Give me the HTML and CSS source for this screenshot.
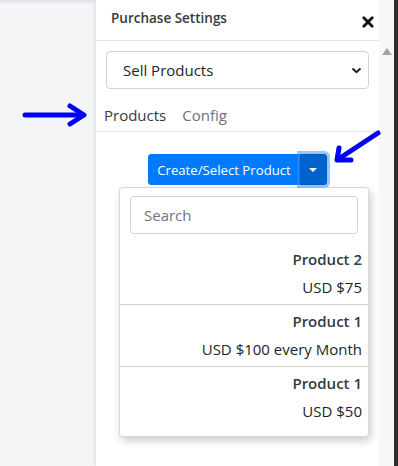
FILE: index.html
```html
<!DOCTYPE html>
<html lang="en">
<head>
    <meta charset="UTF-8">
    <meta name="viewport" content="width=device-width, initial-scale=1.0">
    <title>Purchase Settings</title>
    <link rel="stylesheet" href="styles.css">
</head>
<body>
    <div class="page">
        <div class="backdrop"></div>

        <aside class="panel">
            <header class="panel-head">
                <h2>Purchase Settings</h2>
                <button class="close" type="button" aria-label="Close">
                    <svg width="12" height="12" viewBox="0 0 12 12"><path d="M1.8 1.8 L10.2 10.2 M10.2 1.8 L1.8 10.2" stroke="#111" stroke-width="2.8" stroke-linecap="round"/></svg>
                </button>
            </header>

            <div class="panel-body">
                <div class="select">
                    <span>Sell Products</span>
                    <svg width="11" height="7" viewBox="0 0 11 7"><path d="M1.5 1.5 L5.5 5.2 L9.5 1.5" fill="none" stroke="#222" stroke-width="2"/></svg>
                </div>

                <nav class="tabs">
                    <a class="tab active">Products</a>
                    <a class="tab">Config</a>
                </nav>

                <div class="picker">
                    <div class="btn-group">
                        <button class="btn-main" type="button">Create/Select Product</button>
                        <button class="btn-toggle" type="button"><span class="caret"></span></button>
                    </div>

                    <div class="menu">
                        <div class="search">Search</div>
                        <div class="item">
                            <div class="item-name">Product 2</div>
                            <div class="item-price">USD $75</div>
                        </div>
                        <div class="item">
                            <div class="item-name">Product 1</div>
                            <div class="item-price">USD $100 every Month</div>
                        </div>
                        <div class="item">
                            <div class="item-name">Product 1</div>
                            <div class="item-price">USD $50</div>
                        </div>
                    </div>
                </div>
            </div>
        </aside>

        <div class="scrollbar"><span class="scroll-up"></span></div>
        <div class="edge"></div>

        <!-- annotation arrows -->
        <svg class="arrows" width="398" height="466" viewBox="0 0 398 466">
            <g fill="none" stroke="#0000f5" stroke-width="5" stroke-linecap="round" stroke-linejoin="round">
                <path d="M25 115 L82 115"/>
                <path d="M70 106 L84 115 L70 124"/>
                <path d="M378 133 L340 158"/>
                <path d="M339 148 L337 160 L351 160"/>
            </g>
        </svg>
    </div>
</body>
</html>
```

FILE: styles.css
```css
* {
    box-sizing: border-box;
}
body {
    margin: 0;
    font-family: "Open Sans", "Liberation Sans", sans-serif;
    color: #343a40;
    background-color: #f4f5f7;
}
.page {
    position: relative;
    display: flex;
    height: 466px;
    overflow: hidden;
}
.backdrop {
    width: 95px;
    background: linear-gradient(#dcdfe2, #f4f5f7 4px);
}
.panel {
    width: 284px;
    background-color: #fff;
    border-left: 1px solid #e3e5e8;
    box-shadow: -2px 0 3px rgba(0,0,0,0.04);
}
.panel-head {
    display: flex;
    justify-content: space-between;
    align-items: center;
    height: 41px;
    padding: 0 5px 0 15px;
    border-bottom: 1px solid #e2e4e7;
}
.panel-head h2 {
    margin: 0 0 4px;
    font-size: 13.5px;
    font-weight: 600;
    color: #343a40;
}
.close {
    display: flex;
    padding: 0;
    margin-top: 4px;
    border: none;
    background: none;
}
.panel-body {
    padding-top: 10px;
}
.select {
    display: flex;
    justify-content: space-between;
    align-items: center;
    height: 38px;
    margin: 0 10px;
    padding: 0 6px 0 16px;
    border: 1px solid #ced4da;
    border-radius: 4px;
    font-size: 15px;
    color: #212529;
}
.tabs {
    display: flex;
    gap: 16px;
    margin-top: 14px;
    padding: 0 8px 4px;
    border-bottom: 1px solid #e2e4e7;
}
.tab {
    font-size: 15px;
    line-height: 24px;
    color: #6c757d;
}
.tab.active {
    color: #343a40;
}
.picker {
    padding-top: 22px;
}
.btn-group {
    display: flex;
    justify-content: center;
}
.btn-main, .btn-toggle {
    height: 31px;
    border: 1px solid #007bff;
    color: #fff;
    font-family: inherit;
    font-size: 13.2px;
}
.btn-main {
    padding: 0 8px;
    background-color: #007bff;
    border-radius: 3px 0 0 3px;
}
.btn-toggle {
    display: flex;
    justify-content: center;
    align-items: center;
    width: 27px;
    padding: 0;
    background-color: #0062cc;
    border-color: #005cbf;
    border-radius: 0 3px 3px 0;
    box-shadow: 0 0 0 3px rgba(38,143,255,0.5);
}
.caret {
    width: 0;
    height: 0;
    border-left: 4px solid transparent;
    border-right: 4px solid transparent;
    border-top: 4px solid #fff;
}
.menu {
    width: 250px;
    margin: 2px 0 0 23px;
    padding: 8px 0;
    background-color: #fff;
    border: 1px solid rgba(0,0,0,0.15);
    border-radius: 4px;
    box-shadow: 2px 4px 8px rgba(0,0,0,0.2);
}
.search {
    height: 38px;
    margin: 0 10px 9px;
    padding: 0 13px;
    border: 1px solid #ced4da;
    border-radius: 4px;
    font-size: 15px;
    line-height: 37px;
    color: #6c757d;
}
.item {
    padding: 4px 6px 5px;
    text-align: right;
    font-size: 15px;
    line-height: 24px;
}
.item + .item {
    border-top: 1px solid #cfd1d3;
}
.item-name {
    font-weight: 600;
    color: #343a40;
}
.item-price {
    margin-top: 4px;
    color: #212529;
}
.scrollbar {
    width: 15px;
    background-color: #f8f8f8;
    padding-top: 48px;
    display: flex;
    justify-content: center;
    align-items: flex-start;
}
.scroll-up {
    width: 0;
    height: 0;
    border-left: 5px solid transparent;
    border-right: 5px solid transparent;
    border-bottom: 7px solid #a3a3a3;
}
.edge {
    width: 4px;
    background-color: #2e2e2e;
}
.arrows {
    position: absolute;
    top: 0;
    left: 0;
}
```
